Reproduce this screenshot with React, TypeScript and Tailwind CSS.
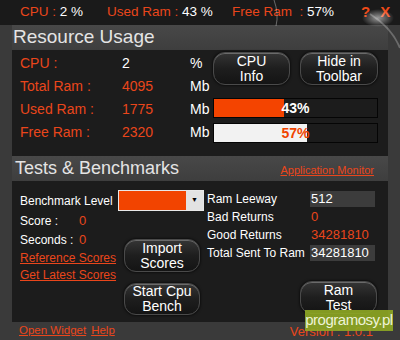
import React from "react";

const orange = "text-[#ea461b]";

function GlassButton({ lines, className }: { lines: string[]; className: string }) {
  return (
    <button
      type="button"
      className={`flex flex-col items-center justify-center rounded-[12px] border border-[#4a4a4a] bg-gradient-to-b from-[#353535] via-[#1e1e1e] to-[#141414] text-[14px] leading-[15px] text-white shadow-[inset_0_1px_0_#6a6a6a,0_0_3px_#000] ${className}`}
    >
      {lines.map((l) => (
        <span key={l}>{l}</span>
      ))}
    </button>
  );
}

function Bar({ pct, fill, text }: { pct: number; fill: string; text: string }) {
  return (
    <div className="relative h-[20px] w-[165px] border border-[#050505] bg-[#1c1c1c]">
      <div className={`h-full ${fill}`} style={{ width: `${pct}%` }} />
      <span className={`absolute inset-0 flex items-center justify-center text-[14px] font-bold ${text}`}>
        {pct}%
      </span>
    </div>
  );
}

function Row({ label, value, unit }: { label: string; value: string; unit: string }) {
  return (
    <div className="flex h-[23px] items-center text-[14px]">
      <span className={`w-[102px] ${orange}`}>{label}</span>
      <span className={`w-[68px] ${value === "2" ? "text-white" : orange}`}>{value}</span>
      <span className="text-white">{unit}</span>
    </div>
  );
}

function StatRow({ label, children }: { label: string; children: React.ReactNode }) {
  return (
    <div className="flex h-[18px] items-center text-[12px]">
      <span className="w-[103px] text-white">{label}</span>
      {children}
    </div>
  );
}

export default function App() {
  return (
    <div className="relative h-[340px] w-[400px] overflow-hidden bg-[#3a3a3a] font-['Liberation_Sans',Arial,sans-serif]">
      {/* top bar */}
      <div className="flex h-[25px] items-center bg-[#1a1a1a] pl-[20px] text-[13.5px]">
        <span className="w-[87px] whitespace-pre">
          <span className={orange}>CPU :</span>
          <span className="text-white"> 2 %</span>
        </span>
        <span className="w-[125px] whitespace-pre">
          <span className={orange}>Used Ram :</span>
          <span className="text-white"> 43 %</span>
        </span>
        <span className="whitespace-pre">
          <span className={orange}>Free Ram  :</span>
          <span className="text-white"> 57%</span>
        </span>
        <span className="ml-[27px] text-[15px] font-bold text-[#f04a18]">?</span>
        <span className="ml-[10px] text-[15px] font-bold text-[#f04a18]">X</span>
      </div>

      {/* Resource Usage */}
      <div className="mx-[12px] flex h-[25px] items-center bg-gradient-to-b from-[#484848] to-[#3e3e3e] pl-[1px] text-[19px] text-[#e4e4e4]">
        Resource Usage
      </div>
      <div className="mx-[12px] flex h-[106px] bg-[#1c1c1c] pl-[8px] pt-[2px]">
        <div className="w-[193px]">
          <Row label="CPU :" value="2" unit="%" />
          <Row label="Total Ram :" value="4095" unit="Mb" />
          <Row label="Used Ram :" value="1775" unit="Mb" />
          <Row label="Free Ram  :" value="2320" unit="Mb" />
        </div>
        <div className="flex flex-col">
          <div className="flex gap-[10px]">
            <GlassButton lines={["CPU", "Info"]} className="h-[33px] w-[77px]" />
            <GlassButton lines={["Hide in", "Toolbar"]} className="h-[33px] w-[78px]" />
          </div>
          <div className="mt-[13px] flex flex-col gap-[5px]">
            <Bar pct={43} fill="bg-[#f44400]" text="text-white" />
            <Bar pct={57} fill="bg-[#f2f2f2]" text="text-[#f04400]" />
          </div>
        </div>
      </div>

      {/* Tests & Benchmarks */}
      <div className="mx-[12px] flex h-[25px] items-center justify-between bg-gradient-to-b from-[#484848] to-[#3e3e3e] pl-[3px] pr-[14px]">
        <span className="text-[18px] text-[#e4e4e4]">Tests &amp; Benchmarks</span>
        <a href="#" className={`mt-[4px] text-[11px] underline ${orange}`}>
          Application Monitor
        </a>
      </div>
      <div className="mx-[12px] flex h-[141px] bg-[#1c1c1c] pl-[8px] pt-[9px]">
        <div className="w-[187px]">
          <div className="flex h-[21px] items-center text-[12px] text-white">
            <span className="w-[98px]">Benchmark Level</span>
            <div className="flex h-[21px] w-[86px] border border-[#e8e8e8]">
              <div className="flex-1 bg-[#f24400]" />
              <div className="flex w-[17px] items-center justify-center bg-[#e2e2e2] text-[7px] text-black">▼</div>
            </div>
          </div>
          <div className="flex">
            <div className="w-[104px] text-[12px]">
              <div className="flex h-[20px] items-center">
                <span className="w-[59px] text-white">Score :</span>
                <span className={`text-[13px] ${orange}`}>0</span>
              </div>
              <div className="flex h-[18px] items-center">
                <span className="w-[59px] text-white">Seconds :</span>
                <span className={`text-[13px] ${orange}`}>0</span>
              </div>
              <div className="flex h-[17px] items-center">
                <a href="#" className={`underline ${orange}`}>Reference Scores</a>
              </div>
              <div className="flex h-[17px] items-center">
                <a href="#" className={`underline ${orange}`}>Get Latest Scores</a>
              </div>
            </div>
            <div className="flex flex-col gap-[11px] pt-[28px]">
              <GlassButton lines={["Import", "Scores"]} className="h-[33px] w-[76px]" />
              <GlassButton lines={["Start Cpu", "Bench"]} className="h-[32px] w-[76px]" />
            </div>
          </div>
        </div>
        <div className="flex flex-col">
          <StatRow label="Ram Leeway">
            <span className="flex h-[16px] w-[65px] items-center bg-[#3c3c3c] pl-[1px] text-[13px] text-white">512</span>
          </StatRow>
          <StatRow label="Bad Returns">
            <span className={`pl-[1px] text-[13px] ${orange}`}>0</span>
          </StatRow>
          <StatRow label="Good Returns">
            <span className={`pl-[1px] text-[13px] ${orange}`}>34281810</span>
          </StatRow>
          <StatRow label="Total Sent To Ram">
            <span className="flex h-[16px] w-[65px] items-center bg-[#3c3c3c] pl-[1px] text-[13px] text-white">34281810</span>
          </StatRow>
          <GlassButton lines={["Ram", "Test"]} className="ml-[93px] mt-[19px] h-[33px] w-[77px]" />
        </div>
      </div>

      {/* footer */}
      <div className="flex h-[18px] items-center pl-[19px] text-[11.5px]">
        <a href="#" className={`underline ${orange}`}>Open Widget</a>
        <a href="#" className={`ml-[5px] underline ${orange}`}>Help</a>
        <span className={`ml-[175px] mt-[2px] text-[13px] ${orange}`}>Version : 1.0.1</span>
      </div>

      {/* light streak decoration */}
      <svg className="pointer-events-none absolute inset-0" width="400" height="340">
        <defs>
          <radialGradient id="glow" cx="0.5" cy="0.5" r="0.5">
            <stop offset="0" stopColor="#ffffff" stopOpacity="0.55" />
            <stop offset="1" stopColor="#ffffff" stopOpacity="0" />
          </radialGradient>
        </defs>
        <path d="M274 0 Q279 14 276 26" stroke="#ffffff" strokeOpacity="0.35" strokeWidth="1" fill="none" />
        <ellipse cx="378" cy="18" rx="16" ry="9" fill="url(#glow)" />
        <path d="M370 14 Q392 28 400 48" stroke="#ffffff" strokeOpacity="0.25" strokeWidth="2" fill="none" />
      </svg>

      {/* watermark */}
      <div className="absolute left-[305px] top-[310px] flex h-[21px] w-[88px] items-center justify-center bg-[#8fa823]/90 text-[15px] tracking-[-0.5px] text-[#eef3d8]">
        programosy.pl
      </div>
    </div>
  );
}
